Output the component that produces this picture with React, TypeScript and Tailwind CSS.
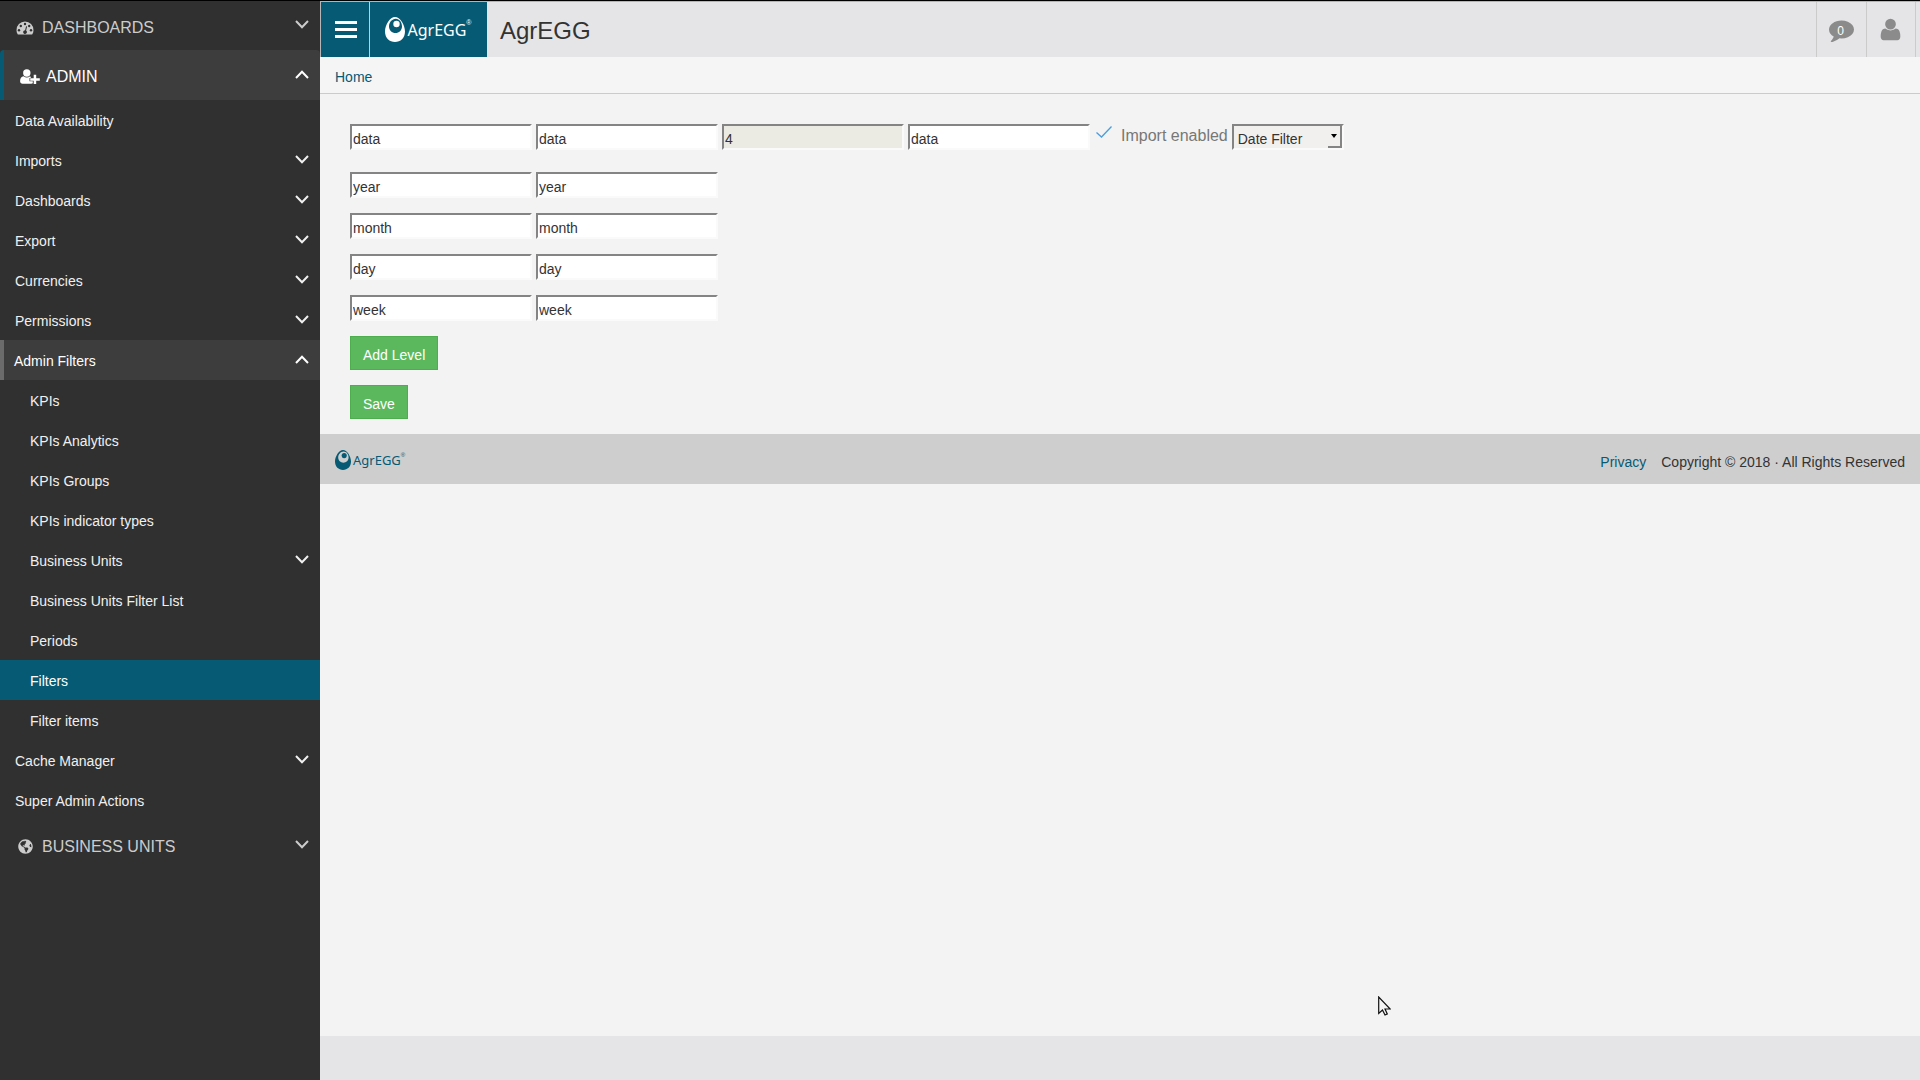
import React from "react";
import { FaGlobeAmericas } from "react-icons/fa";
import clsx from "clsx";

type MenuItem = {
  label: string;
  level: 1 | 2;
  arrow?: "up" | "down";
  active?: boolean;
};

const menu: MenuItem[] = [
  { label: "Data Availability", level: 1 },
  { label: "Imports", level: 1, arrow: "down" },
  { label: "Dashboards", level: 1, arrow: "down" },
  { label: "Export", level: 1, arrow: "down" },
  { label: "Currencies", level: 1, arrow: "down" },
  { label: "Permissions", level: 1, arrow: "down" },
  { label: "Admin Filters", level: 1, arrow: "up" },
  { label: "KPIs", level: 2 },
  { label: "KPIs Analytics", level: 2 },
  { label: "KPIs Groups", level: 2 },
  { label: "KPIs indicator types", level: 2 },
  { label: "Business Units", level: 2, arrow: "down" },
  { label: "Business Units Filter List", level: 2 },
  { label: "Periods", level: 2 },
  { label: "Filters", level: 2, active: true },
  { label: "Filter items", level: 2 },
  { label: "Cache Manager", level: 1, arrow: "down" },
  { label: "Super Admin Actions", level: 1 },
];

const levels = ["year", "month", "day", "week"];

const Chevron = ({ up = false }: { up?: boolean }) => (
  <svg
    viewBox="0 0 14 9"
    className="mb-0.5 ml-auto h-[9px] w-3.5 shrink-0"
    fill="none"
    stroke="currentColor"
    strokeWidth="2"
  >
    <path d={up ? "M1 8 7 1.8 13 8" : "M1 1 7 7.2 13 1"} />
  </svg>
);

const GaugeIcon = () => (
  <svg viewBox="0 0 18 14" className="mt-1 h-3.5 w-[18px] shrink-0">
    <path
      fill="currentColor"
      d="M9 .5a8.5 8.5 0 0 0-8.5 8.7c0 1.5.4 2.9 1.2 4.1.1.2.3.3.5.3h13.6c.2 0 .4-.1.5-.3.8-1.2 1.2-2.6 1.2-4.1A8.5 8.5 0 0 0 9 .5Z"
    />
    <g fill="#303030">
      <circle cx="3" cy="9.2" r="1.2" />
      <circle cx="4.8" cy="5" r="1.2" />
      <circle cx="9" cy="3" r="1.2" />
      <circle cx="13.2" cy="5" r="1.2" />
      <circle cx="15" cy="9.2" r="1.2" />
      <path d="m10.100 5.200 1 .3-1 4a1.900 1.900 0 1 1-1-.3Z" />
    </g>
  </svg>
);

const UserPlusIcon = () => (
  <svg viewBox="0 0 20 15" className="mt-0.5 h-[15px] w-5 shrink-0" fill="currentColor">
    <circle cx="6.8" cy="4" r="3.7" />
    <path d="M3.600 7.200C1.200 7.200.1 9.500.1 12.300c0 1.600 1 2.500 2.400 2.500h8.700c.7 0 1.200-.2 1.600-.5v-2.100H9.500V8.900h1.200c.2-.6.1-1.200-.6-1.700-2 1.700-4.500 1.700-6.500 0Z" />
    <path d="M13.700 5.800h2.500v3.500h3.600v2.400h-3.600v3.400h-2.500v-3.400h-3.500V9.300h3.500Z" />
  </svg>
);

const CommentIcon = () => (
  <svg viewBox="0 0 1792 1792" className="size-[25px]" fill="currentColor">
    <path d="M1792 896q0 174-120 321.500t-326 233-450 85.500q-70 0-145-8-198 175-460 242-49 14-114 22-17 2-30.500-9t-17.500-29v-1q-3-4-.5-12t2-10 4.500-9.500l6-9 7-8.500 8-9q7-8 31-34.500t34.500-38 31-39.500 32.500-51 27-59 26-76q-157-89-247.500-220t-90.500-281q0-130 71-248.500t191-204.500 286-136.500 348-50.500q244 0 450 85.500t326 233 120 321.500z" />
  </svg>
);

const UserIcon = () => (
  <svg viewBox="0 0 1792 1792" className="size-[25px]" fill="currentColor">
    <path d="M1600 1399q0 109-62.500 187t-150.500 78h-982q-88 0-150.500-78t-62.500-187q0-85 8.500-160.500t31.500-152 58.500-131 94-89 134.500-34.500q131 128 377 128t377-128q76 0 134.500 34.500t94 89 58.500 131 31.500 152 8.500 160.500zm-320-887q0 159-112.500 271.500t-271.500 112.500-271.500-112.500-112.500-271.500 112.500-271.500 271.500-112.500 271.500 112.500 112.500 271.500z" />
  </svg>
);

const EggMark = ({ className }: { className: string }) => (
  <svg viewBox="0 0 20 25" className={className}>
    <path
      fill="currentColor"
      fillRule="evenodd"
      d="M10 0C15 0 20 8 20 14.500 20 21 15.500 25 10 25S0 21 0 14.500C0 8 5 0 10 0Zm.8 1.800C7 1.800 4 5.500 4 9.500c0 3.800 3 6.500 6.500 6.500s6.500-2.700 6.500-6.500c0-4-2.500-7.700-6.200-7.700Z"
    />
    <circle cx="11.5" cy="7" r="3.2" fill="currentColor" />
  </svg>
);

const inputClass =
  "h-[26px] w-[182px] border-2 border-t-[#848484] border-l-[#848484] border-r-[#fafafa] border-b-[#fafafa] bg-white px-px pt-1 text-sm leading-5 text-[#333] outline-none";

const Field = ({ label, value, readOnly }: { label: string; value: string; readOnly?: boolean }) => (
  <input
    type="text"
    aria-label={label}
    defaultValue={value}
    readOnly={readOnly}
    className={clsx(inputClass, readOnly && "bg-[#ebebe4]!")}
  />
);

const Sidebar = () => (
  <nav className="w-80 shrink-0 bg-[#303030] text-sm text-[#f0f0f0]">
    <a href="#" className="flex h-[49px] items-center pr-[11px] pl-4 text-base text-[#ccc]">
      <GaugeIcon />
      <span className="ml-2 pt-1">DASHBOARDS</span>
      <Chevron />
    </a>
    <a
      href="#"
      className="flex h-[50px] items-center rounded-t border-l-4 border-[#065a73] bg-[#3d3d3d] pr-[11px] pl-4 text-base text-white"
    >
      <UserPlusIcon />
      <span className="ml-1.5 pt-1">ADMIN</span>
      <Chevron up />
    </a>
    <ul>
      {menu.map((item) => (
        <li key={item.label}>
          <a
            href="#"
            className={clsx(
              "flex h-10 items-center pr-[11px]",
              item.arrow === "up"
                ? "border-l-4 border-[#6b6b6b] bg-[#3d3d3d] pl-2.5 text-white"
                : item.level === 1
                  ? "pl-[15px]"
                  : "pl-[30px]",
              item.active && "bg-[#065a73] text-white"
            )}
          >
            <span className="pt-0.5">{item.label}</span>
            {item.arrow && <Chevron up={item.arrow === "up"} />}
          </a>
        </li>
      ))}
    </ul>
    <a href="#" className="flex h-[50px] items-center pr-[11px] pl-[18px] text-base text-[#ccc]">
      <FaGlobeAmericas className="mt-0.5 size-[15px] shrink-0" />
      <span className="ml-[9px] pt-1">BUSINESS UNITS</span>
      <Chevron />
    </a>
  </nav>
);

const Header = () => (
  <header className="flex h-14 items-stretch border-t border-l border-[#b5b5b8] bg-[#e5e5e8] pr-1">
    <button
      type="button"
      aria-label="Toggle menu"
      className="flex w-12 flex-col items-center justify-center gap-1 bg-[#065a73] pl-0.5"
    >
      <span className="h-[3px] w-[22px] bg-white" />
      <span className="h-[3px] w-[22px] bg-white" />
      <span className="h-[3px] w-[22px] bg-white" />
    </button>
    <a
      href="#"
      className="flex w-[118px] items-center justify-center border-l border-[#cbcbcb] bg-[#065a73] text-white"
    >
      <EggMark className="h-[25px] w-5" />
      <span className="ml-0.5 font-['Noto_Sans'] text-base leading-6">AgrEGG</span>
      <span className="mb-3 text-[7px]">®</span>
    </a>
    <h1 className="ml-[13px] flex items-center pt-0.5 text-2xl text-[#333]">AgrEGG</h1>
    <button
      type="button"
      aria-label="Messages"
      className="relative ml-auto flex w-[50px] items-center justify-center border-l border-[#cbcbcb] text-[#8b8b8b]"
    >
      <CommentIcon />
      <span className="absolute inset-0 flex items-center justify-center pt-0.5 pr-0.5 text-xs text-white">0</span>
    </button>
    <button
      type="button"
      aria-label="Account"
      className="flex w-[50px] items-center justify-center border-x border-[#cbcbcb] pr-0.5 text-[#8b8b8b]"
    >
      <UserIcon />
    </button>
  </header>
);

const FilterForm = () => (
  <form className="flex flex-col items-start px-[30px] pt-[30px] pb-[15px]">
    <div className="mb-[22px] flex items-start gap-1">
      <Field label="Name" value="data" />
      <Field label="Code" value="data" />
      <Field label="Position" value="4" readOnly />
      <Field label="Key" value="data" />
      <label className="relative ml-0.5 flex h-6 items-center text-base text-[#777]">
        <input type="checkbox" defaultChecked className="peer mr-[9px] size-4 appearance-none" />
        <svg
          viewBox="0 0 16 12"
          className="invisible absolute top-0.5 left-0 h-3 w-4 peer-checked:visible"
          fill="none"
          stroke="#4a9ee0"
          strokeWidth="1.3"
        >
          <path d="m.5 6.500 5 4.500L15.500.5" />
        </svg>
        Import enabled
      </label>
      <div className="relative flex h-[26px]">
        <select
          aria-label="Filter type"
          className="h-[26px] w-28 appearance-none border-2 border-t-[#848484] border-l-[#848484] border-r-[#fafafa] border-b-[#fafafa] bg-[#f2f0ee] pt-1 pl-1 text-sm leading-[18px] text-[#333] outline-none"
        >
          <option>Date Filter</option>
        </select>
        <span className="pointer-events-none absolute top-0.5 right-0.5 flex h-[22px] w-3.5 items-center justify-center border-r-2 border-b-2 border-[#848484] bg-[#f2f0ee]">
          <svg viewBox="0 0 6 4" className="h-1 w-1.5">
            <path d="M0 0h6L3 4Z" />
          </svg>
        </span>
      </div>
    </div>
    {levels.map((level) => (
      <div key={level} className="mb-[15px] flex gap-1">
        <Field label={`${level} name`} value={level} />
        <Field label={`${level} code`} value={level} />
      </div>
    ))}
    <button
      type="button"
      className="mb-[15px] h-[34px] border border-[#4cae4c] bg-[#5cb85c] px-3 pt-1 text-sm text-white"
    >
      Add Level
    </button>
    <button type="submit" className="h-[34px] border border-[#4cae4c] bg-[#5cb85c] px-3 pt-1 text-sm text-white">
      Save
    </button>
  </form>
);

const Footer = () => (
  <footer className="flex h-[50px] items-center justify-between bg-[#cecece] px-[15px] text-sm">
    <a href="#" className="flex items-center pt-0.5 text-[#065a73]">
      <EggMark className="h-5 w-4" />
      <span className="ml-0.5 font-['Noto_Sans'] text-[13px] leading-5">AgrEGG</span>
      <span className="mb-2.5 text-[6px]">®</span>
    </a>
    <div className="flex gap-[15px] pt-1.5">
      <a href="#" className="text-[#065a73]">
        Privacy
      </a>
      <span className="text-[#333]">Copyright © 2018 · All Rights Reserved</span>
    </div>
  </footer>
);

const App = () => {
  return (
    <div className="relative flex min-h-screen border-t border-black bg-[#f3f3f3] font-['Liberation_Sans',Arial,sans-serif]">
      <Sidebar />
      <div className="flex min-w-0 flex-1 flex-col">
        <Header />
        <div className="flex h-[37px] items-center border-b border-[#cbcbcb] bg-[#f5f5f5] px-[15px] pt-1 text-sm">
          <a href="#" className="text-[#065a73]">
            Home
          </a>
        </div>
        <main>
          <FilterForm />
          <Footer />
        </main>
        <div className="mt-auto h-11 bg-[#e5e5e8]" />
      </div>

      {/* Mouse pointer */}
      <svg viewBox="0 0 13 20" className="pointer-events-none absolute top-[995px] left-[1378px] h-5 w-[13px]">
        <path d="M.7 1v16.500l3.800-3.500 2.500 5 2.300-1.100-2.300-4.900h5.200Z" fill="#f4f4f4" stroke="#111" strokeWidth="1.2" />
      </svg>
    </div>
  );
};

export default App;
